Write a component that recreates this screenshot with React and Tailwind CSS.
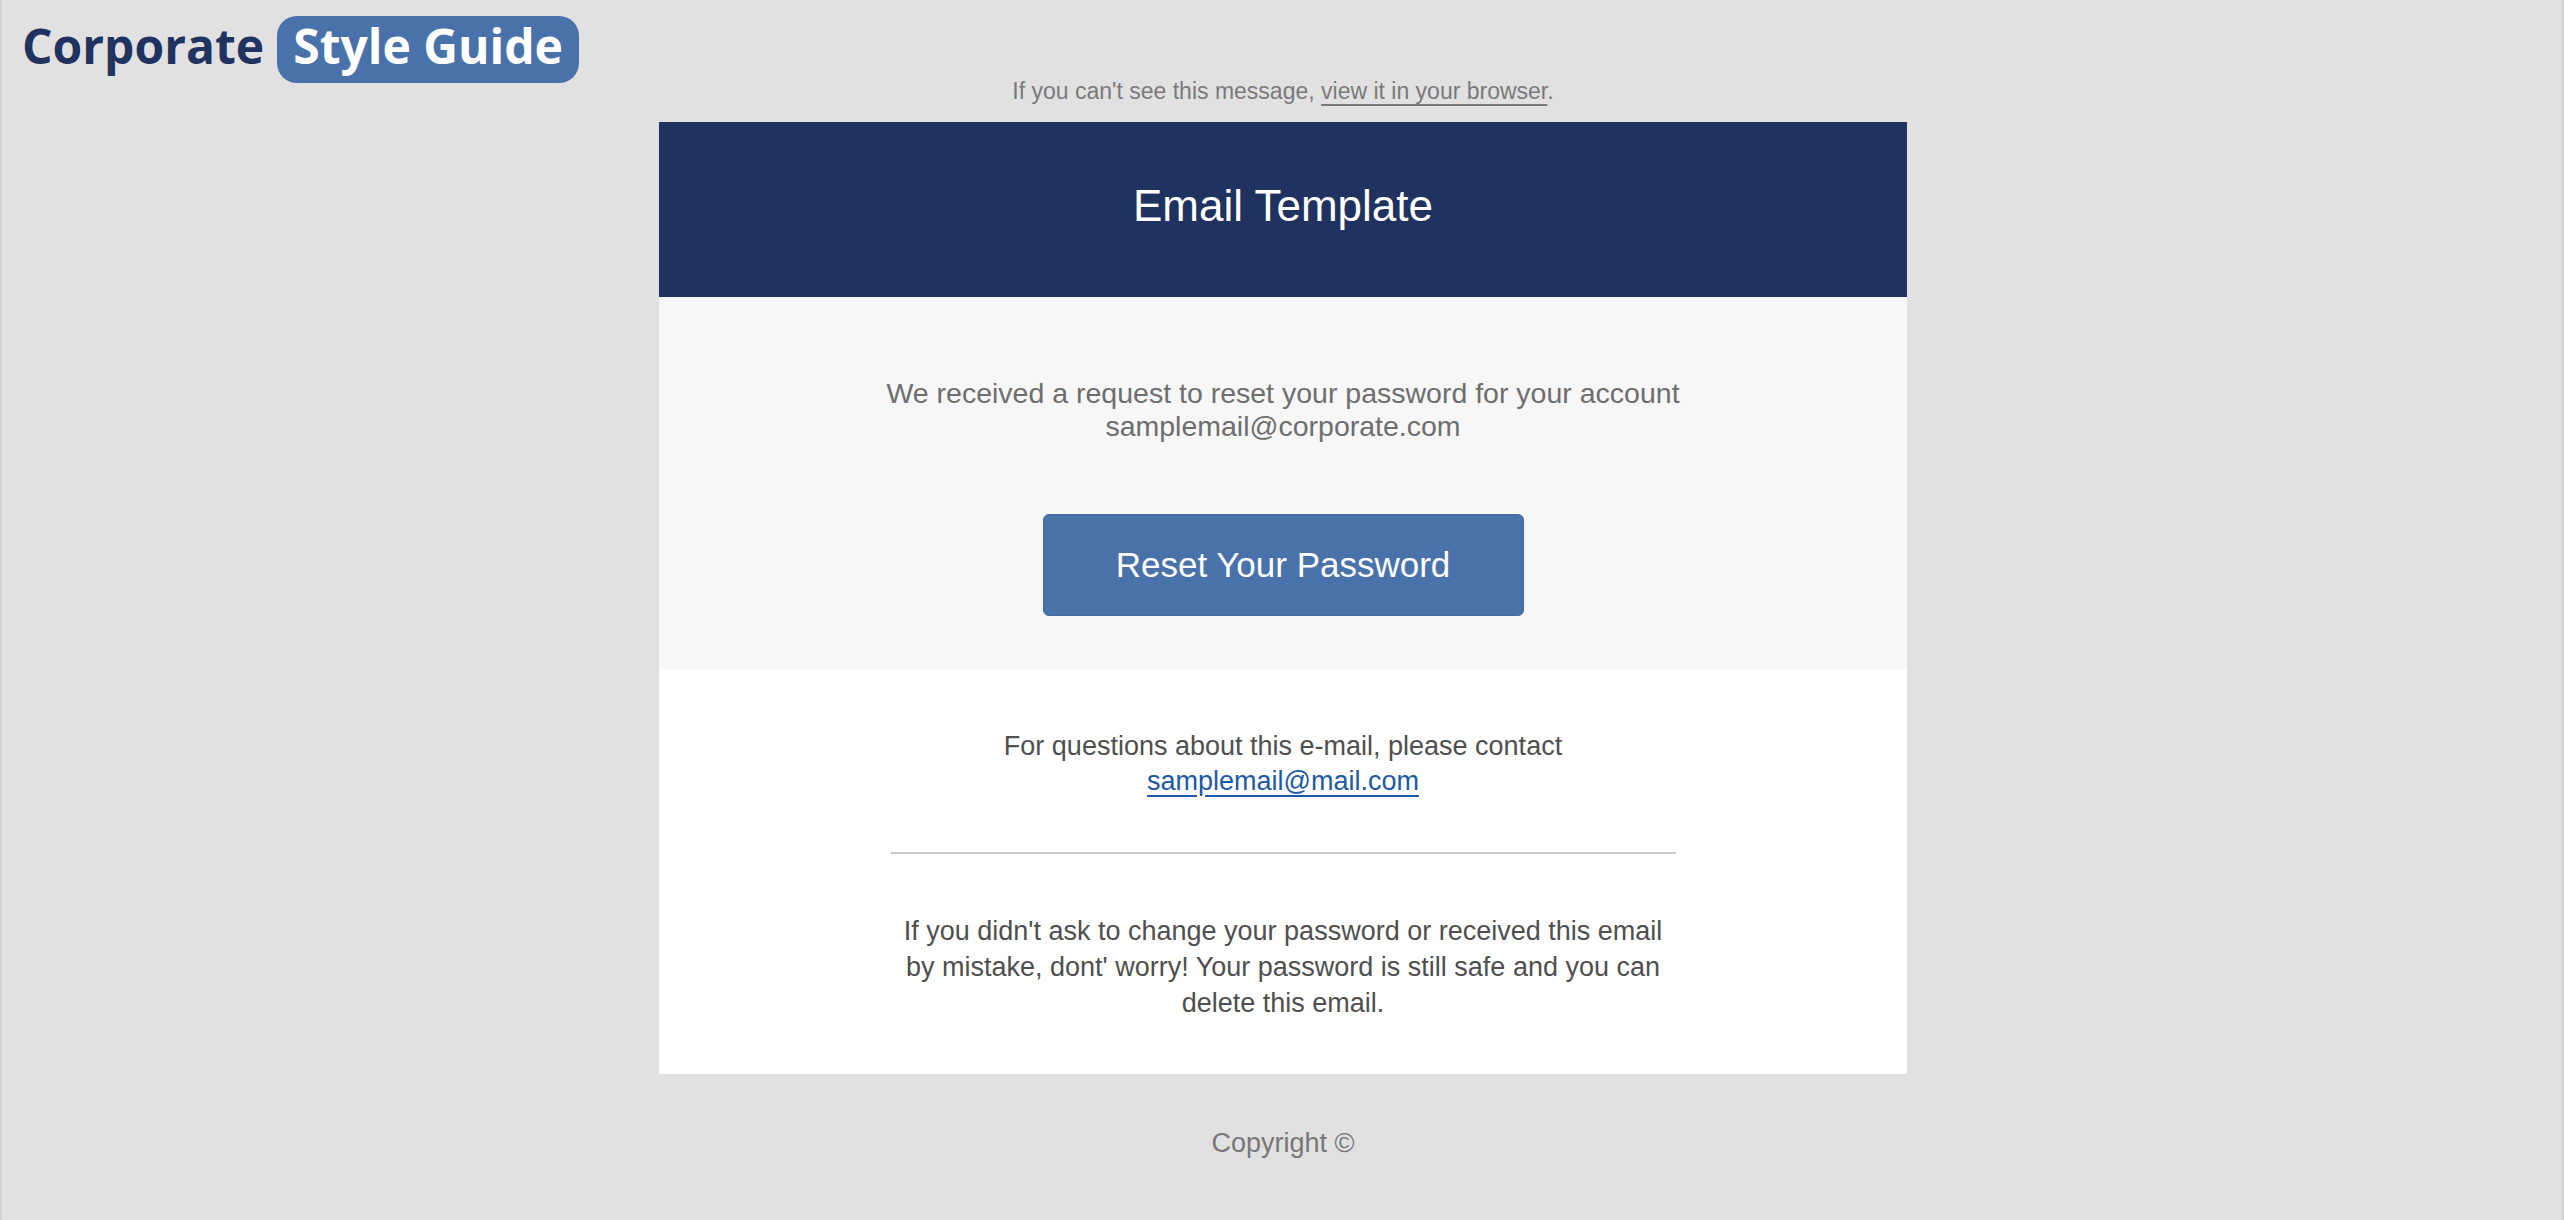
export default function App() {
  return (
    <div className="min-h-screen bg-[#e1e1e1] border-x-2 border-[#d3d3d3]">
      <div className="pl-[2px]">
        <div className="flex items-baseline pl-[18px] pt-[16px] font-['Open_Sans',sans-serif] font-bold text-[48px] leading-[48px]">
          <span className="text-[#1f3260]">Corporate</span>
          <span className="ml-[13px] rounded-[20px] bg-[#4a72aa] px-[16px] pt-[6px] pb-[13px] text-white">
            Style Guide
          </span>
        </div>

        <div className="-mt-[5px] text-center font-['Liberation_Sans',Arial,sans-serif] text-[23px] leading-[26px] text-[#7a7a7a]">
          If you can't see this message,{" "}
          <a href="#" className="underline underline-offset-[5px] decoration-[#7a7a7a]">
            view it in your browser
          </a>
          .
        </div>

        <div className="mx-auto mt-[18px] w-[1248px] font-['Liberation_Sans',Arial,sans-serif]">
          <div className="flex h-[175px] items-center justify-center bg-[#203360] pb-[7px]">
            <h1 className="text-[44px] font-normal text-white">Email Template</h1>
          </div>

          <div className="flex flex-col items-center bg-[#f7f7f7] pt-[80px] pb-[53px]">
            <p className="max-w-[860px] text-center text-[28.5px] leading-[33px] text-[#6e6e6e]">
              We received a request to reset your password for your account samplemail@corporate.com
            </p>
            <button className="mt-[71px] flex h-[102px] w-[481px] items-center justify-center rounded-[6px] border border-[#4369a3] bg-[#4a72aa] text-[35px] text-white">
              Reset Your Password
            </button>
          </div>

          <div className="flex flex-col items-center bg-white pt-[60px] pb-[53px]">
            <p className="w-[785px] text-center text-[27px] leading-[35px] text-[#4f4f4f]">
              For questions about this e-mail, please contact
              <br />
              <a href="#" className="text-[#2058a8] underline underline-offset-[5px]">
                samplemail@mail.com
              </a>
            </p>
            <div className="mt-[53px] h-[2px] w-[785px] bg-[#c9c9c9]" />
            <p className="mt-[59px] w-[785px] text-center text-[27px] leading-[36px] text-[#4f4f4f]">
              If you didn't ask to change your password or received this email by mistake, dont' worry! Your password is still safe and you can delete this email.
            </p>
          </div>
        </div>

        <div className="mt-[52px] text-center font-['Liberation_Sans',Arial,sans-serif] text-[27px] leading-[35px] text-[#777777]">
          Copyright ©
        </div>
      </div>
    </div>
  );
}
